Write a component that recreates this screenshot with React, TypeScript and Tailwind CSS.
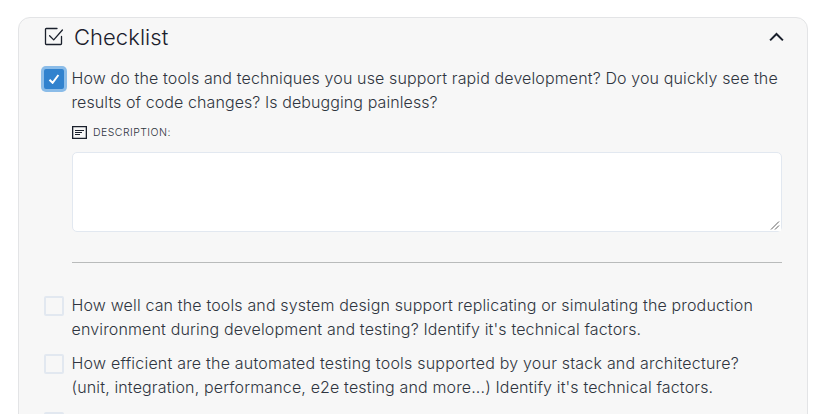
import { useState } from "react";

function BoxCheckIcon() {
  return (
    <svg width="20" height="20" viewBox="0 0 20 20" fill="none" stroke="#1a202c" strokeWidth="1.3" strokeLinecap="round" strokeLinejoin="round">
      <path d="M13 1.5H2.3a.8.8 0 0 0-.8.8v14.4a.8.8 0 0 0 .8.8h14.4a.8.8 0 0 0 .8-.8V9.4" />
      <path d="M5.6 8.8l4.1 4.1L18.4 3" />
    </svg>
  );
}

function DescriptionIcon() {
  return (
    <svg width="15" height="13" viewBox="0 0 15 13" fill="none" stroke="#1a202c">
      <path d="M.65.65h13.7v11.7H.65z" strokeWidth="1.3" />
      <path d="M3 4.5h9M3 6.5h7M3 8.5h5" strokeWidth="1" />
    </svg>
  );
}

function Chevron() {
  return (
    <svg width="16" height="10" viewBox="0 0 16 10" fill="none" stroke="#1a202c" strokeWidth="2">
      <path d="M1.1 8.4L7.5 2l6.4 6.4" />
    </svg>
  );
}

function Grip() {
  return (
    <svg width="11" height="11" viewBox="0 0 11 11" className="pointer-events-none absolute bottom-px right-px bg-white" fill="none" stroke="#444" strokeWidth="0.85">
      <path d="M1 9.5L9 1.5M5 9.5L9 5.5" />
    </svg>
  );
}

function Checkbox({ checked, onToggle }: { checked: boolean; onToggle: () => void }) {
  return (
    <button
      role="checkbox"
      aria-checked={checked}
      onClick={onToggle}
      className={
        checked
          ? "flex size-5 shrink-0 items-center justify-center rounded-[2px] bg-[#3182ce] shadow-[0_0_0_3px_#8bbce8]"
          : "size-5 shrink-0 rounded-[2px] border-2 border-[#e2e8f0]"
      }
    >
      {checked && (
        <svg width="12" height="10" viewBox="0 0 12 10" fill="none" stroke="white" strokeWidth="2">
          <path d="M1.5 5.8L4.6 8.8L10.4 1" />
        </svg>
      )}
    </button>
  );
}

const questions = [
  [
    { text: "How do the tools and techniques you use support rapid development? Do you quickly see the", tracking: "tracking-[0.125px]" },
    { text: "results of code changes? Is debugging painless?", tracking: "tracking-[0.085px]" },
  ],
  [
    { text: "How well can the tools and system design support replicating or simulating the production", tracking: "tracking-[0.15px]" },
    { text: "environment during development and testing? Identify it's technical factors.", tracking: "tracking-[0.148px]" },
  ],
  [
    { text: "How efficient are the automated testing tools supported by your stack and architecture?", tracking: "tracking-[0.205px]" },
    { text: "(unit, integration, performance, e2e testing and more...) Identify it's technical factors.", tracking: "tracking-[0.144px]" },
  ],
];

export default function App() {
  const [checked, setChecked] = useState([true, false, false, false]);
  const toggle = (i: number) => setChecked(checked.map((c, j) => (j === i ? !c : c)));

  const row = (i: number) => (
    <div className="flex items-start gap-[7.5px]">
      <div className="flex pt-[3px]">
        <Checkbox checked={checked[i]} onToggle={() => toggle(i)} />
      </div>
      <p className="whitespace-nowrap text-base font-light text-[#2f3540]">
        {questions[i].map((line) => (
          <span key={line.text} className={"block " + line.tracking}>
            {line.text}
          </span>
        ))}
      </p>
    </div>
  );

  return (
    <div className="h-[414px] overflow-hidden bg-white px-[18px] pt-[17px] font-['Inter',sans-serif] text-[#1a202c]">
      <section className="h-[480px] w-[790px] rounded-xl border border-[#e3e4e6] bg-[#f7f7f7] px-[25px]">
        <header className="flex h-[38px] items-center">
          <BoxCheckIcon />
          <h2 className="ml-[10px] flex-1 text-[22px] font-light tracking-[0.05px]">Checklist</h2>
          <button aria-label="Collapse" className="-mr-[3px]">
            <Chevron />
          </button>
        </header>
        <div className="mt-[10px]">
          {row(0)}
          <div className="ml-7 mt-3">
            <label className="flex h-3 items-center gap-[6px] text-[10.5px] font-light tracking-[0.45px] text-[#2f3540]">
              <DescriptionIcon />
              <span className="pt-[2px]">DESCRIPTION:</span>
            </label>
            <div className="relative mt-[14px]">
              <textarea className="block h-20 w-full resize rounded-[5px] border border-[#e2e8f0] bg-white p-2 outline-none" />
              <Grip />
            </div>
          </div>
          <hr className="ml-7 mt-[30px] border-[#b9bbbb]" />
        </div>
        <div className="mt-[30px] flex flex-col gap-[10px]">
          {row(1)}
          {row(2)}
          <div className="flex pt-[3px]">
            <Checkbox checked={checked[3]} onToggle={() => toggle(3)} />
          </div>
        </div>
      </section>
    </div>
  );
}
